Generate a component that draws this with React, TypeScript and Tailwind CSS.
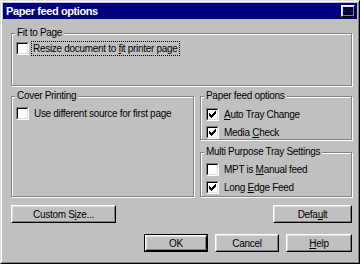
import type { ReactNode } from "react";

const Check = ({ checked }: { checked?: boolean }) => (
  <span className="relative block w-[13px] h-[13px] shrink-0 bg-white border border-t-[#808080] border-l-[#808080] border-b-white border-r-white">
    <span className="absolute inset-0 border border-t-black border-l-black border-b-[#dfdfdf] border-r-[#dfdfdf]" />
    {checked && (
      <svg className="absolute left-[2px] top-[2px]" width="7" height="7" viewBox="0 0 7 7" shapeRendering="crispEdges">
        <path
          fill="#000"
          d="M6 0h1v1h-1z M5 1h2v1h-2z M0 2h1v1h-1z M4 2h3v1h-3z M0 3h2v1h-2z M3 3h3v1h-3z M0 4h5v1h-5z M1 5h3v1h-3z M2 6h1v1h-1z"
        />
      </svg>
    )}
  </span>
);

const Row = ({ checked, children }: { checked?: boolean; children: ReactNode }) => (
  <div className="flex items-center h-[13px]">
    <Check checked={checked} />
    <span className="ml-[5px] whitespace-nowrap">{children}</span>
  </div>
);

const Group = ({ title, className, children }: { title: string; className?: string; children?: ReactNode }) => (
  <div className={`relative border border-[#808080] shadow-[inset_1px_1px_0_#fff,1px_1px_0_#fff] ${className ?? ""}`}>
    <span className="absolute left-[3px] top-[-8px] bg-[#c0c0c0] px-[2px] leading-[13px] whitespace-nowrap">{title}</span>
    {children}
  </div>
);

const Btn = ({ children, def, className }: { children: ReactNode; def?: boolean; className?: string }) => (
  <div className={`${def ? "border border-black" : ""} ${className ?? ""}`}>
    <div className="h-full border border-t-white border-l-white border-b-black border-r-black">
      <div className="h-full border border-t-[#dfdfdf] border-l-[#dfdfdf] border-b-[#808080] border-r-[#808080] flex items-center justify-center">
        {children}
      </div>
    </div>
  </div>
);

const U = ({ children }: { children: ReactNode }) => <span className="underline underline-offset-[1px]">{children}</span>;

export default function App() {
  return (
    <div
      className="w-[360px] h-[264px] bg-[#c0c0c0] border border-t-[#dfdfdf] border-l-[#dfdfdf] border-b-black border-r-black text-[10px] tracking-[-0.3px] text-black leading-[13px]"
      style={{ fontFamily: '"Liberation Sans", Arial, sans-serif' }}
    >
      <div className="h-full border border-t-white border-l-white border-b-[#808080] border-r-[#808080] p-[1px] flex flex-col">
        <div className="h-[16px] bg-[#000080] flex items-center justify-between pl-[3px] pr-[2px]">
          <span className="text-white font-bold text-[11px] tracking-[-0.4px]">Paper feed options</span>
          <Btn className="w-[14px] h-[12px]">
            <svg width="8" height="7" viewBox="0 0 8 7" shapeRendering="crispEdges">
              <path
                fill="#000"
                d="M0 0h2v1h-2z M6 0h2v1h-2z M1 1h2v1h-2z M5 1h2v1h-2z M2 2h4v1h-4z M3 3h2v1h-2z M2 4h4v1h-4z M1 5h2v1h-2z M5 5h2v1h-2z M0 6h2v1h-2z M6 6h2v1h-2z"
              />
            </svg>
          </Btn>
        </div>

        <div className="flex flex-col pl-[8px] pr-[5px]">
          <Group title="Fit to Page" className="mt-[14px] h-[53px] pt-[8px] pl-[4px]">
            <div className="flex items-center h-[13px]">
              <Check />
              <span className="ml-[3px] px-[1px] outline outline-1 outline-dotted outline-black whitespace-nowrap">
                Resize document to <U>f</U>it printer page
              </span>
            </div>
          </Group>

          <div className="flex gap-[6px] mt-[10px]">
            <Group title="Cover Printing" className="w-[183px] h-[101px] pt-[10px] pl-[4px]">
              <Row>Use different source for first page</Row>
            </Group>
            <div className="flex-1 flex flex-col gap-[12px]">
              <Group title="Paper feed options" className="h-[44px] pt-[11px] pl-[5px] flex flex-col gap-[5px]">
                <Row checked>
                  <U>A</U>uto Tray Change
                </Row>
                <Row checked>
                  Media <U>C</U>heck
                </Row>
              </Group>
              <Group title="Multi Purpose Tray Settings" className="h-[45px] pt-[10px] pl-[5px] flex flex-col gap-[5px]">
                <Row>
                  MPT is <U>M</U>anual feed
                </Row>
                <Row checked>
                  Long <U>E</U>dge Feed
                </Row>
              </Group>
            </div>
          </div>

          <div className="flex justify-between mt-[8px]">
            <Btn className="w-[105px] h-[18px]">
              Custom S<U>i</U>ze...
            </Btn>
            <Btn className="w-[79px] h-[18px]">
              Defa<U>u</U>lt
            </Btn>
          </div>

          <div className="flex justify-end gap-[7px] mt-[11px]">
            <Btn def className="w-[64px] h-[18px]">
              OK
            </Btn>
            <Btn className="w-[64px] h-[18px]">Cancel</Btn>
            <Btn className="w-[66px] h-[18px]">
              <U>H</U>elp
            </Btn>
          </div>
        </div>
      </div>
    </div>
  );
}
